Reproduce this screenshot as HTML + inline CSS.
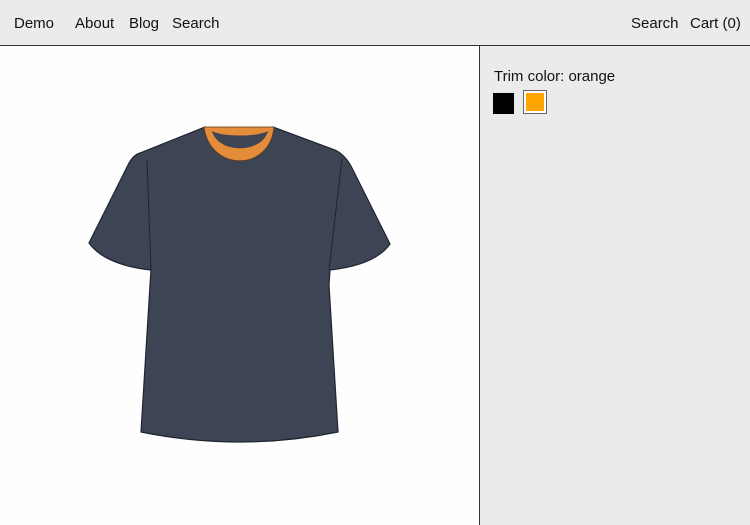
<!DOCTYPE html>
<html><head><meta charset="utf-8"><style>
html,body{margin:0;padding:0;width:750px;height:525px;overflow:hidden;font-family:"Liberation Sans",sans-serif;color:#111;background:#ebebeb}
.hdr{position:absolute;left:0;top:0;width:750px;height:45px;background:#ebebeb;border-bottom:1px solid #333;font-size:15px}
.hdr span{position:absolute;top:15px}
.left{position:absolute;left:0;top:46px;width:479px;height:479px;background:#fefefe;border-right:1px solid #333}
.right{position:absolute;left:480px;top:46px;width:270px;height:479px;background:#ebebeb}
.lbl{position:absolute;left:14px;top:22px;font-size:15px}
.sw1{position:absolute;left:13px;top:47px;width:21px;height:21px;background:#000}
.sw2{position:absolute;left:43px;top:44px;width:22px;height:22px;background:#ffa500;border:1px solid #666;outline:2px solid #fff;outline-offset:-3px}
</style></head><body>
<div class="hdr">
<span style="left:14px">Demo</span>
<span style="left:75px">About</span>
<span style="left:129px">Blog</span>
<span style="left:172px">Search</span>
<span style="left:631px">Search</span>
<span style="left:690px">Cart (0)</span>
</div>
<div class="left">
<svg width="479" height="479" viewBox="0 46 479 479" style="position:absolute;left:0;top:0">
<path d="M205,127 C220,138 260,138 273,127 L335,150 Q346,155 353,170 L390,244 Q375,265 330,270 L329,285 L338,432 Q240,452 141,432 L150,285 L151,270 Q105,265 89,243 L128,165 Q133,155 140,153 Z" fill="#3d4454" stroke="#1f2430" stroke-width="1.2"/>
<path d="M151,270 L147,160 M329,270 L342,158" fill="none" stroke="#1f2430" stroke-width="1"/>
<path d="M204,127 C210,172 270,172 274,127 Z" fill="#e48c3a" stroke="#5a3a20" stroke-width="0.8"/>
<path d="M212,131 C222,137 258,137 268,131 C262,154 218,154 212,131 Z" fill="#3d4454"/>
</svg>
</div>
<div class="right">
<div class="lbl">Trim color: orange</div>
<div class="sw1"></div>
<div class="sw2"></div>
</div>
</body></html>
